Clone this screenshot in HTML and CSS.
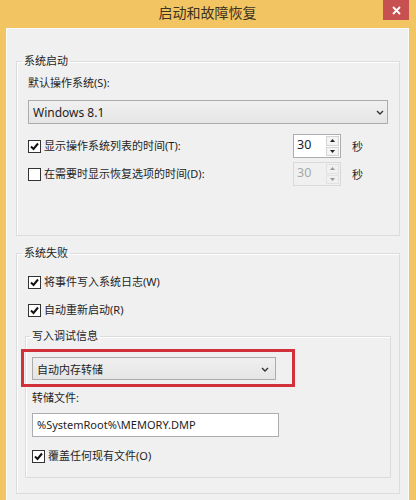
FILE: index.html
```html
<!DOCTYPE html>
<html lang="zh-CN">
<head>
  <meta charset="UTF-8" />
  <title>启动和故障恢复</title>
  <meta name="viewport" content="width=device-width, initial-scale=1.0"/>
  <link rel="stylesheet" href="styles.css">
</head>
<body>

<div class="window">
  <div class="titlebar">
    <span class="title">启动和故障恢复</span>
    <span class="close">
      <svg width="9" height="9" viewBox="0 0 9 9"><path d="M1 1L8 8M8 1L1 8" stroke="#fff" stroke-width="1.8"/></svg>
    </span>
  </div>

  <div class="client">
    <fieldset class="group group-startup">
      <legend>系统启动</legend>
      <div class="group-body">
        <div class="field-label">默认操作系统(S):</div>
        <div class="combo combo-os">
          <span>Windows 8.1</span>
          <svg class="chevron" width="8" height="5" viewBox="0 0 8 5"><path d="M1 1L4 4L7 1" fill="none" stroke="#333" stroke-width="1.4"/></svg>
        </div>

        <div class="time-row first">
          <div class="check">
            <span class="box"><svg width="11" height="11" viewBox="0 0 11 11"><path d="M2 5.5L4.5 8L9 2.5" fill="none" stroke="#111" stroke-width="2"/></svg></span>
            <span>显示操作系统列表的时间(T):</span>
          </div>
          <div class="spin">
            <span class="spin-value">30</span>
            <span class="spin-buttons">
              <span class="spin-btn"><svg width="5" height="3" viewBox="0 0 5 3"><path d="M0 3L2.5 0L5 3Z" fill="#222"/></svg></span>
              <span class="spin-btn"><svg width="5" height="3" viewBox="0 0 5 3"><path d="M0 0L2.5 3L5 0Z" fill="#222"/></svg></span>
            </span>
          </div>
          <span class="unit">秒</span>
        </div>

        <div class="time-row">
          <div class="check">
            <span class="box"></span>
            <span>在需要时显示恢复选项的时间(D):</span>
          </div>
          <div class="spin disabled">
            <span class="spin-value">30</span>
            <span class="spin-buttons">
              <span class="spin-btn"><svg width="5" height="3" viewBox="0 0 5 3"><path d="M0 3L2.5 0L5 3Z" fill="#999"/></svg></span>
              <span class="spin-btn"><svg width="5" height="3" viewBox="0 0 5 3"><path d="M0 0L2.5 3L5 0Z" fill="#999"/></svg></span>
            </span>
          </div>
          <span class="unit">秒</span>
        </div>
      </div>
    </fieldset>

    <fieldset class="group group-failure">
      <legend>系统失败</legend>
      <div class="group-body">
        <div class="check check-row">
          <span class="box"><svg width="11" height="11" viewBox="0 0 11 11"><path d="M2 5.5L4.5 8L9 2.5" fill="none" stroke="#111" stroke-width="2"/></svg></span>
          <span>将事件写入系统日志(W)</span>
        </div>
        <div class="check check-row second">
          <span class="box"><svg width="11" height="11" viewBox="0 0 11 11"><path d="M2 5.5L4.5 8L9 2.5" fill="none" stroke="#111" stroke-width="2"/></svg></span>
          <span>自动重新启动(R)</span>
        </div>

        <fieldset class="group group-debug">
          <legend>写入调试信息</legend>
          <div class="group-body">
            <div class="combo combo-dump">
              <span>自动内存转储</span>
              <svg class="chevron" width="8" height="5" viewBox="0 0 8 5"><path d="M1 1L4 4L7 1" fill="none" stroke="#333" stroke-width="1.4"/></svg>
              <span class="highlight"></span>
            </div>
            <div class="field-label dump-label">转储文件:</div>
            <div class="textbox">%SystemRoot%\MEMORY.DMP</div>
            <div class="check overwrite">
              <span class="box"><svg width="11" height="11" viewBox="0 0 11 11"><path d="M2 5.5L4.5 8L9 2.5" fill="none" stroke="#111" stroke-width="2"/></svg></span>
              <span>覆盖任何现有文件(O)</span>
            </div>
          </div>
        </fieldset>
      </div>
    </fieldset>
  </div>
</div>

</body>
</html>
```

FILE: styles.css
```css
body {
  margin: 0;
  font-family: "Noto Sans", "Noto Sans CJK SC", sans-serif;
  font-size: 11px;
  color: #1e1e1e;
  background: #f2c462;
}

.window { background: #f2c462; padding: 0 7px 0 6px; }

.titlebar {
  height: 28px;
  display: flex; align-items: center; justify-content: center;
  position: relative;
}
.title { font-size: 14px; color: #3b3321; line-height: 28px; margin-top: -2px; }
.close {
  position: absolute; top: 0; right: 0;
  width: 26px; height: 20px;
  background: #c75050;
  display: flex; align-items: center; justify-content: center;
}

.client {
  background: #f0f0f0;
  border: 1px solid #fbfbfb;
  border-bottom: none;
  padding: 24px 8px 8px 9px;
}

/* group boxes */
.group {
  margin: 0; padding: 0; min-width: 0;
  border: 1px solid #dcdcdc;
  box-shadow: inset 1px 1px 0 #fff;
}
.group legend {
  padding: 0 2px; margin-left: 5px;
  line-height: 16px; height: 16px;
}
.group-body { padding: 0 11px; }

.group-startup .group-body { padding-top: 6px; padding-bottom: 49px; }
.group-failure { margin-top: 9px; }
.group-failure .group-body { padding: 11px 8px 15px 8px; }

.group-debug { margin-top: 8px; }
.group-debug legend { margin-left: 4px; }
.group-debug .group-body { padding: 13px 6px 11px 6px; }

.field-label { line-height: 16px; height: 16px; }

/* combo boxes */
.combo {
  position: relative;
  height: 22px;
  border: 1px solid #acacac;
  background: linear-gradient(#f0f0f0, #e5e5e5);
  display: flex; align-items: center;
  padding-left: 4px;
}
.combo-os { margin-top: 9px; height: 22px; font-size: 12px; }
.combo-dump { width: 238px; height: 21px; }
.chevron { position: absolute; right: 3px; top: 9px; }
.combo-dump .chevron { right: 6px; }

.highlight {
  position: absolute;
  left: -12px; right: -20px; top: -9px; bottom: -8px;
  border: 3px solid #d2303a;
}

/* check boxes */
.check { display: flex; align-items: center; line-height: 16px; }
.box {
  width: 11px; height: 11px;
  border: 1px solid #333;
  background: #fff;
  margin-right: 3px;
  display: flex; align-items: center; justify-content: center;
}
.check-row { height: 20px; margin-left: 3px; }
.check-row.second { margin-top: 8px; }

/* timeout rows */
.time-row { display: flex; align-items: center; height: 24px; margin-top: 4px; }
.time-row.first { margin-top: 10px; }
.time-row .check { flex: 1; }

.spin {
  width: 46px; height: 22px;
  border: 1px solid #abadb3;
  background: #fff;
  display: flex;
}
.spin-value { flex: 1; padding-left: 3px; line-height: 20px; font-size: 12.5px; }
.spin-buttons { width: 13px; display: flex; flex-direction: column; padding: 1px 1px 1px 0; gap: 1px; }
.spin-btn {
  flex: 1;
  border: 1px solid #d4d4d4;
  background: #f4f4f4;
  display: flex; align-items: center; justify-content: center;
}
.spin.disabled { border-color: #d9d9d9; background: #f0f0f0; color: #a8a8a8; }
.spin.disabled .spin-btn { border-color: #e2e2e2; background: #f0f0f0; }

.unit { width: 47px; padding-left: 11px; box-sizing: border-box; }

/* dump file */
.dump-label { margin-top: 10px; }
.textbox {
  margin-top: 7px;
  width: 241px; height: 22px;
  border: 1px solid #abadb3;
  background: #fff;
  padding-left: 4px;
  line-height: 22px;
}
.overwrite { height: 20px; margin-top: 9px; }
```
